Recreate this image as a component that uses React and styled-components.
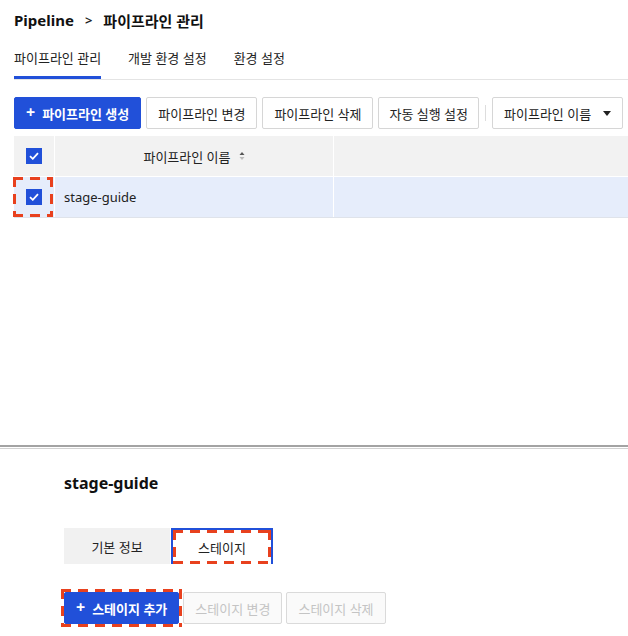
import styled, { createGlobalStyle, css } from 'styled-components';

const GlobalStyle = createGlobalStyle`
  html, body {
    margin: 0;
    padding: 0;
    background: #fff;
    font-family: "Noto Sans", "Noto Sans CJK KR", sans-serif;
    color: #222;
  }
`;

const Page = styled.div`
  width: 628px;
  height: 636px;
  overflow: hidden;
  display: flex;
  flex-direction: column;
`;

const Top = styled.div`
  padding-left: 14px;
  height: 445px;
  box-sizing: border-box;
`;

const Breadcrumb = styled.div`
  display: flex;
  align-items: center;
  height: 40px;
  font-size: 15px;
  font-weight: 700;
  color: #111;
  gap: 11px;
`;

const Chevron = styled.span`
  font-weight: 600;
  font-size: 13px;
  color: #222;
`;

const TabBar = styled.div`
  display: flex;
  gap: 27px;
  border-bottom: 1px solid #e4e4e4;
  height: 39px;
`;

const Tab = styled.div`
  font-size: 13px;
  color: #222;
  padding-top: 8px;
  box-sizing: border-box;
  ${({ $active }) =>
    $active &&
    css`
      border-bottom: 3px solid #2150d9;
    `}
`;

const Toolbar = styled.div`
  display: flex;
  align-items: center;
  gap: 5px;
  margin-top: 17px;
  height: 32px;
`;

const Button = styled.button`
  height: 32px;
  padding: 0 ${({ $pad }) => $pad || 11}px;
  font-family: inherit;
  font-size: 13px;
  border-radius: 2px;
  display: flex;
  align-items: center;
  gap: 7px;
  cursor: pointer;
  white-space: nowrap;
  ${({ $primary }) =>
    $primary
      ? css`
          background: #2150d9;
          border: 1px solid #2150d9;
          color: #fff;
          font-weight: 700;
        `
      : css`
          background: #fff;
          border: 1px solid #d6d6d6;
          color: #222;
        `}
  ${({ disabled }) =>
    disabled &&
    css`
      color: #c4c4c4;
      border-color: #dadada;
      background: #fafafa;
    `}
`;

const Plus = styled.span`
  font-size: 16px;
  font-weight: 700;
  line-height: 1;
  margin-top: -2px;
`;

const Sep = styled.div`
  width: 1px;
  height: 16px;
  background: #ddd;
  margin: 0 1px;
`;

const Caret = styled.span`
  width: 0;
  height: 0;
  border-left: 4px solid transparent;
  border-right: 4px solid transparent;
  border-top: 5px solid #222;
  margin-left: 5px;
`;

const Table = styled.div`
  margin-top: 7px;
`;

const Row = styled.div`
  display: grid;
  grid-template-columns: 41px 279px 1fr;
  height: 40px;
  background: ${({ $head }) => ($head ? '#f2f2f2' : '#e6edfb')};
  border-bottom: 1px solid ${({ $head }) => ($head ? '#fff' : '#dfe3ea')};
`;

const Cell = styled.div`
  position: relative;
  display: flex;
  align-items: center;
  justify-content: ${({ $center }) => ($center ? 'center' : 'flex-start')};
  padding-left: ${({ $pad }) => $pad || 0}px;
  border-right: ${({ $last }) => ($last ? 'none' : '1px solid #fff')};
  font-size: 13px;
  color: #222;
`;

const Check = styled.span`
  width: 16px;
  height: 16px;
  background: #2150d9;
  display: flex;
  align-items: center;
  justify-content: center;
`;

const Dashed = styled.div`
  position: absolute;
  inset: ${({ $inset }) => $inset || '0'};
  pointer-events: none;
  background:
    repeating-linear-gradient(90deg, #e8411e 0 10px, transparent 10px 17px) top left / 100% 3px no-repeat,
    repeating-linear-gradient(90deg, #e8411e 0 10px, transparent 10px 17px) bottom left / 100% 3px no-repeat,
    repeating-linear-gradient(180deg, #e8411e 0 10px, transparent 10px 17px) top left / 3px 100% no-repeat,
    repeating-linear-gradient(180deg, #e8411e 0 10px, transparent 10px 17px) top right / 3px 100% no-repeat;
`;

const SortIcon = styled.svg`
  margin-left: 8px;
`;

const Divider = styled.div`
  height: 4px;
  border-top: 2px solid #a3a3a3;
  border-bottom: 1px solid #d2d2d2;
  box-sizing: border-box;
`;

const Bottom = styled.div`
  padding-left: 64px;
  padding-top: 22px;
`;

const Title = styled.div`
  font-size: 16px;
  font-weight: 700;
  color: #111;
  height: 24px;
  line-height: 24px;
`;

const SubTabs = styled.div`
  display: flex;
  margin-top: 33px;
  height: 36px;
`;

const SubTab = styled.div`
  position: relative;
  width: ${({ $w }) => $w}px;
  display: flex;
  align-items: center;
  justify-content: center;
  font-size: 13px;
  color: #222;
  box-sizing: border-box;
  ${({ $active }) =>
    $active
      ? css`
          background: #fff;
          border: 2px solid #2150d9;
          border-bottom: none;
          margin-left: 1px;
        `
      : css`
          background: #f1f1f1;
        `}
`;

const StageBar = styled.div`
  display: flex;
  gap: 4px;
  margin-top: 28px;
`;

const Wrap = styled.div`
  position: relative;
`;

function CheckMark() {
  return (
    <Check>
      <svg width="10" height="8" viewBox="0 0 10 8">
        <path d="M1 4.2 L3.8 6.8 L9 1.2" stroke="#fff" strokeWidth="1.8" fill="none" />
      </svg>
    </Check>
  );
}

export default function App() {
  return (
    <Page>
      <GlobalStyle />
      <Top>
        <Breadcrumb>
          <span>Pipeline</span>
          <Chevron>&gt;</Chevron>
          <span>파이프라인 관리</span>
        </Breadcrumb>
        <TabBar>
          <Tab $active>파이프라인 관리</Tab>
          <Tab>개발 환경 설정</Tab>
          <Tab>환경 설정</Tab>
        </TabBar>
        <Toolbar>
          <Button $primary>
            <Plus>+</Plus>파이프라인 생성
          </Button>
          <Button>파이프라인 변경</Button>
          <Button>파이프라인 삭제</Button>
          <Button $pad={10}>자동 실행 설정</Button>
          <Sep />
          <Button $pad={11}>
            파이프라인 이름
            <Caret />
          </Button>
        </Toolbar>
        <Table>
          <Row $head>
            <Cell $center>
              <CheckMark />
            </Cell>
            <Cell $center>
              파이프라인 이름
              <SortIcon width="6" height="10" viewBox="0 0 6 10">
                <path d="M3 1 L5.5 4 H0.5 Z" fill="#555" />
                <path d="M3 9 L5.5 6 H0.5 Z" fill="#bbb" />
              </SortIcon>
            </Cell>
            <Cell $last />
          </Row>
          <Row>
            <Cell $center>
              <CheckMark />
              <Dashed $inset="0 1px 0 -1px" />
            </Cell>
            <Cell $pad={9}>stage-guide</Cell>
            <Cell $last />
          </Row>
        </Table>
      </Top>
      <Divider />
      <Bottom>
        <Title>stage-guide</Title>
        <SubTabs>
          <SubTab $w={106}>기본 정보</SubTab>
          <SubTab $w={102} $active>
            스테이지
            <Dashed $inset="0 0 0 0" />
          </SubTab>
        </SubTabs>
        <StageBar>
          <Wrap>
            <Button $primary $pad={11}>
              <Plus>+</Plus>스테이지 추가
            </Button>
            <Dashed $inset="-3px -3px -3px -3px" />
          </Wrap>
          <Button disabled>스테이지 변경</Button>
          <Button disabled>스테이지 삭제</Button>
        </StageBar>
      </Bottom>
    </Page>
  );
}
